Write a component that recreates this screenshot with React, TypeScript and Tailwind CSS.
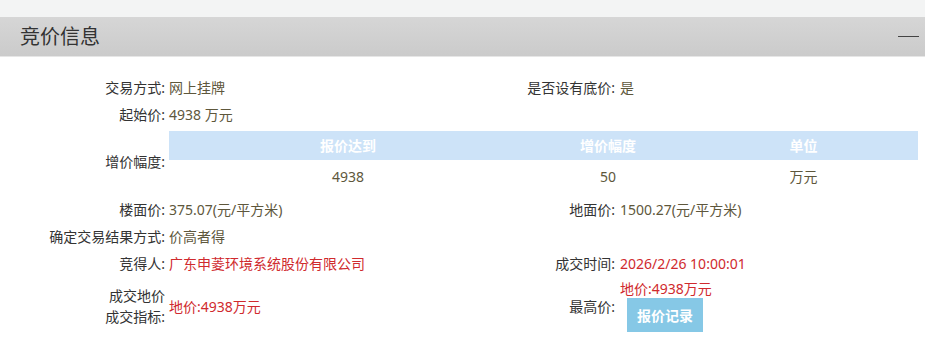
export default function App() {
  const font = { fontFamily: '"Noto Sans", "Noto Sans CJK SC", sans-serif' };
  return (
    <div style={font} className="w-[925px] h-[349px] bg-white text-[14px] text-[#333] overflow-hidden">
      <div className="h-[17px] bg-[#f3f4f4]" />
      <div className="h-[40px] flex items-center justify-between bg-gradient-to-b from-[#d6d6d6] to-[#cbcbcb] border-b border-[#e6e6e6]">
        <h2 className="pl-[20px] text-[20px] text-[#333] leading-none">竞价信息</h2>
        <span className="block w-[21px] h-px bg-[#444] mr-[6px]" />
      </div>

      <div className="pt-[17px]">
        <div className="flex h-[27px] items-center">
          <div className="w-[463px] flex">
            <span className="w-[165px] text-right">交易方式:</span>
            <span className="pl-[4px] text-[#5e573c]">网上挂牌</span>
          </div>
          <div className="flex">
            <span className="w-[152px] text-right">是否设有底价:</span>
            <span className="pl-[5px] text-[#5e573c]">是</span>
          </div>
        </div>
        <div className="flex h-[27px] items-center">
          <span className="w-[165px] text-right">起始价:</span>
          <span className="pl-[4px] text-[#5e573c]">4938 万元</span>
        </div>

        <div className="flex mt-[3px]">
          <span className="w-[165px] text-right self-center">增价幅度:</span>
          <div className="ml-[4px] w-[749px]">
            <div className="flex h-[29px] items-center bg-[#cde3f8] text-white font-bold">
              <span className="w-[358px] text-center">报价达到</span>
              <span className="w-[162px] text-center">增价幅度</span>
              <span className="w-[229px] text-center">单位</span>
            </div>
            <div className="flex h-[32px] items-center text-[#5e573c]">
              <span className="w-[358px] text-center">4938</span>
              <span className="w-[162px] text-center">50</span>
              <span className="w-[229px] text-center">万元</span>
            </div>
          </div>
        </div>

        <div className="flex h-[27px] items-center mt-[4px]">
          <div className="w-[463px] flex">
            <span className="w-[165px] text-right">楼面价:</span>
            <span className="pl-[4px] text-[#5e573c]">375.07(元/平方米)</span>
          </div>
          <div className="flex">
            <span className="w-[152px] text-right">地面价:</span>
            <span className="pl-[5px] text-[#5e573c]">1500.27(元/平方米)</span>
          </div>
        </div>
        <div className="flex h-[27px] items-center">
          <span className="w-[165px] text-right">确定交易结果方式:</span>
          <span className="pl-[4px] text-[#5e573c]">价高者得</span>
        </div>
        <div className="flex h-[27px] items-center">
          <div className="w-[463px] flex">
            <span className="w-[165px] text-right">竞得人:</span>
            <span className="pl-[4px] text-[#d02a2e]">广东申菱环境系统股份有限公司</span>
          </div>
          <div className="flex">
            <span className="w-[152px] text-right">成交时间:</span>
            <span className="pl-[5px] text-[#d02a2e]">2026/2/26 10:00:01</span>
          </div>
        </div>

        <div className="flex pt-[3px]">
          <div className="w-[463px] flex items-center">
            <span className="w-[165px] text-right leading-[21px]">
              成交地价
              <br />
              成交指标:
            </span>
            <span className="pl-[4px] text-[#d02a2e]">地价:4938万元</span>
          </div>
          <div className="flex items-center">
            <span className="w-[152px] text-right">最高价:</span>
            <div className="pl-[5px] flex flex-col items-start">
              <span className="leading-[18px] text-[#d02a2e]">地价:4938万元</span>
              <button className="ml-[7px] w-[76px] h-[34px] bg-[#86c8e6] text-white font-bold">报价记录</button>
            </div>
          </div>
        </div>
      </div>
    </div>
  );
}
